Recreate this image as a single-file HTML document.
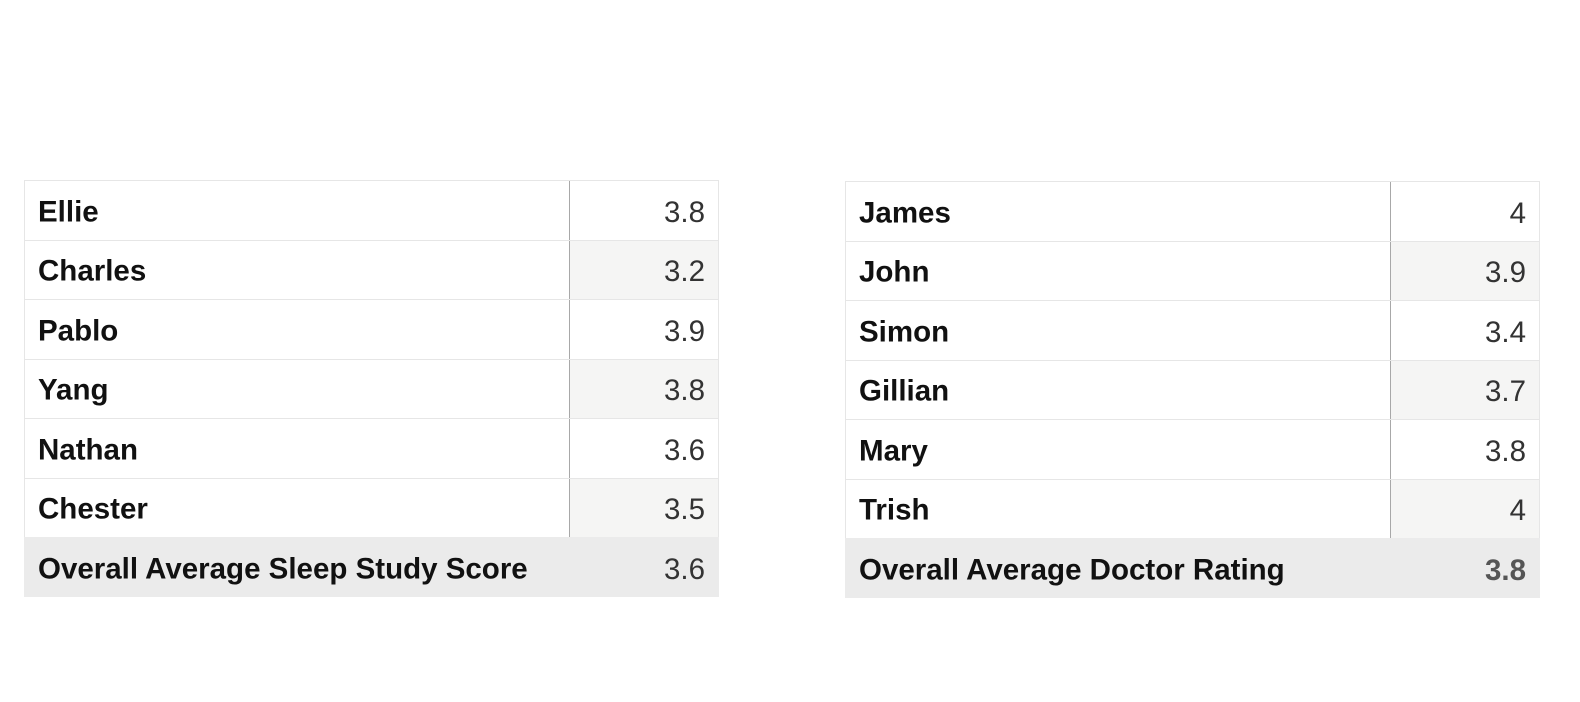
<!DOCTYPE html>
<html><head><style>
body{margin:0;background:#fff;width:1580px;height:702px;position:relative;font-family:"Liberation Sans",sans-serif;overflow:hidden;}
.t{position:absolute;width:695px;}
.r{position:absolute;left:0;width:695px;box-sizing:border-box;border:1px solid #e6e6e6;border-bottom:none;}
.n{position:absolute;left:13px;font-weight:bold;font-size:29.5px;color:#111;top:50%;transform:translateY(-46%);}
.v{position:absolute;right:0;top:2px;bottom:-2px;width:149px;box-sizing:border-box;text-align:right;padding-right:13px;font-size:29.5px;color:#333;display:flex;align-items:center;justify-content:flex-end;}
.v::before{content:"";position:absolute;left:0;top:-2px;bottom:2px;border-left:1px solid #a8a8a8;}
.g{background:#f5f5f4;top:0;bottom:0;padding-top:4px;box-sizing:border-box;}
.g::before{top:0;bottom:0;}
.f{background:#ebebeb;border-color:#ebebeb;}
.f .v::before{display:none;}
</style></head><body>
<div class="t" style="left:24px;top:180px">
<div class="r" style="top:0;height:60px"><span class="n">Ellie</span><span class="v">3.8</span></div>
<div class="r" style="top:60px;height:59px"><span class="n">Charles</span><span class="v g">3.2</span></div>
<div class="r" style="top:119px;height:60px"><span class="n">Pablo</span><span class="v">3.9</span></div>
<div class="r" style="top:179px;height:59px"><span class="n">Yang</span><span class="v g">3.8</span></div>
<div class="r" style="top:238px;height:60px"><span class="n">Nathan</span><span class="v">3.6</span></div>
<div class="r" style="top:298px;height:59px"><span class="n">Chester</span><span class="v g">3.5</span></div>
<div class="r f" style="top:357px;height:60px"><span class="n">Overall Average Sleep Study Score</span><span class="v">3.6</span></div>
</div>
<div class="t" style="left:845px;top:181px">
<div class="r" style="top:0;height:60px"><span class="n">James</span><span class="v">4</span></div>
<div class="r" style="top:60px;height:59px"><span class="n">John</span><span class="v g">3.9</span></div>
<div class="r" style="top:119px;height:60px"><span class="n">Simon</span><span class="v">3.4</span></div>
<div class="r" style="top:179px;height:59px"><span class="n">Gillian</span><span class="v g">3.7</span></div>
<div class="r" style="top:238px;height:60px"><span class="n">Mary</span><span class="v">3.8</span></div>
<div class="r" style="top:298px;height:59px"><span class="n">Trish</span><span class="v g">4</span></div>
<div class="r f" style="top:357px;height:60px"><span class="n">Overall Average Doctor Rating</span><span class="v" style="font-weight:bold;color:#555">3.8</span></div>
</div>
</body></html>
